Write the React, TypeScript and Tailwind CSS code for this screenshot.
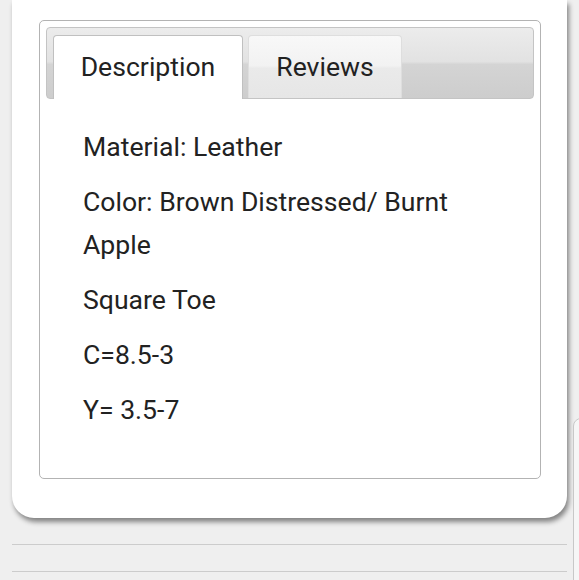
const specs = [
  ['Material: Leather'],
  ['Color: Brown Distressed/ Burnt Apple'],
  ['Square Toe'],
  ['C=8.5-3'],
  ['Y= 3.5-7'],
];

export default function App() {
  return (
    <div className="relative min-h-[580px] overflow-hidden bg-[#efefef] font-['Roboto',sans-serif] text-[#222]">
      {/* product card, top cut off by the viewport */}
      <div className="mx-[12px] w-[555px] rounded-b-[22px] bg-white px-[26px] pb-[39px] pt-[20px] pl-[27px] shadow-[2px_4px_5px_rgba(0,0,0,0.45)]">
        <div className="rounded-[5px] border border-[#b3b3b3] p-[6px] pb-0">
          {/* tab bar */}
          <div className="flex h-[72px] items-end gap-[5px] rounded-[4px] border border-[#c4c4c4] bg-[linear-gradient(#ececec_0%,#e2e2e2_48%,#d4d4d4_52%,#cdcdcd_100%)] px-[6px]">
            <div className="-mb-px flex h-[64px] w-[190px] items-center justify-center rounded-t-[4px] border border-b-0 border-[#c0c0c0] bg-white pb-[2px] text-[26.6px]">
              Description
            </div>
            <div className="flex h-[63px] w-[154px] items-center justify-center rounded-t-[4px] border border-b-0 border-[#dedede] bg-[linear-gradient(#f8f8f8_0%,#f2f2f2_48%,#eaeaea_52%,#e6e6e6_100%)] pb-[1px] text-[26.6px]">
              Reviews
            </div>
          </div>
          {/* tab panel */}
          <div className="flex flex-col gap-[12px] pb-[47px] pl-[37px] pr-[37px] pt-[26px]">
            {specs.map(([t]) => (
              <p key={t} className="text-[26.6px] leading-[43px]">
                {t}
              </p>
            ))}
          </div>
        </div>
      </div>

      <div className="mx-[12px] mt-[26px] h-px w-[555px] bg-[#cccccc]" />
      <div className="mx-[12px] mt-[26px] h-px w-[555px] bg-[#cccccc]" />

      {/* next panel peeking in on the right */}
      <div className="absolute left-[573px] top-[418px] h-[200px] w-[40px] rounded-tl-[8px] border border-[#c8c8c8] bg-[#f6f6f6]" />
    </div>
  );
}
